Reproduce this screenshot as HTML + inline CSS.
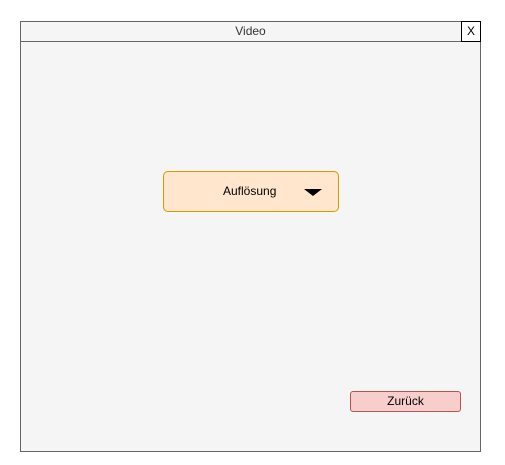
<!DOCTYPE html>
<html><head><style>
body{margin:0;width:505px;height:465px;background:#fff;position:relative;font-family:"Liberation Sans",sans-serif;font-size:12px;color:#333}
div{position:absolute;box-sizing:border-box}
</style></head><body>
<div style="left:20px;top:21px;width:461px;height:431px;background:#f5f5f5;border:1px solid #666"></div>
<div style="left:20px;top:21px;width:461px;height:21px;border:1px solid #666;background:#f5f5f5;text-align:center;line-height:19px">Video</div>
<div style="left:461px;top:21px;width:20px;height:21px;border:1px solid #000;background:#fff;text-align:center;line-height:19px;color:#000">X</div>
<div style="left:163px;top:171px;width:176px;height:41px;background:#ffe6cc;border:1px solid #d79b00;border-radius:5px;line-height:39px;padding-left:59px;color:#000">Auflösung</div>
<svg style="position:absolute;left:304px;top:189px" width="18" height="8"><polygon points="0,0 18,0 9,7" fill="#000"/></svg>
<div style="left:350px;top:391px;width:111px;height:21px;background:#f8cecc;border:1px solid #b85450;border-radius:3px;text-align:center;line-height:19px;color:#000">Zurück</div>
</body></html>
